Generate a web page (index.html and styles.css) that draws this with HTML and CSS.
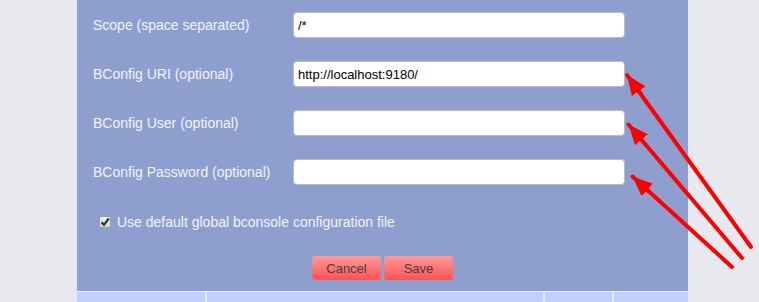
FILE: index.html
```html
<!DOCTYPE html>
<html lang="en">
<head>
  <meta charset="UTF-8" />
  <title>BConfig settings</title>
  <link rel="stylesheet" href="styles.css">
</head>
<body>

  <div class="panel">
    <div class="row">
      <label class="label">Scope (space separated)</label>
      <input class="field" type="text" value="/*" />
    </div>
    <div class="row">
      <label class="label">BConfig URI (optional)</label>
      <input class="field" type="text" value="http://localhost:9180/" />
    </div>
    <div class="row">
      <label class="label">BConfig User (optional)</label>
      <input class="field" type="text" />
    </div>
    <div class="row">
      <label class="label">BConfig Password (optional)</label>
      <input class="field" type="password" />
    </div>

    <div class="check-row">
      <span class="check">
        <svg width="10" height="10" viewBox="0 0 10 10"><path d="M1.5 5.2 L4 7.8 L8.8 1.5" fill="none" stroke="#333" stroke-width="2.2"/></svg>
      </span>
      <span>Use default global bconsole configuration file</span>
    </div>

    <div class="buttons">
      <button class="btn">Cancel</button>
      <button class="btn">Save</button>
    </div>
  </div>

  <div class="table-row">
    <div class="cell c1"></div>
    <div class="cell c2"></div>
    <div class="cell c3"></div>
    <div class="cell c4"></div>
  </div>

  <!-- annotation arrows -->
  <svg class="arrows" width="759" height="302" viewBox="0 0 759 302">
    <defs>
      <marker id="head" markerWidth="5" markerHeight="4.2" refX="5" refY="2.1" orient="auto" markerUnits="strokeWidth">
        <path d="M0 0 L5 2.1 L0 4.2 Z" fill="#ff0000"/>
      </marker>
    </defs>
    <line x1="751" y1="247" x2="627" y2="75" stroke="#ff0000" stroke-width="4" stroke-linecap="round" marker-end="url(#head)"/>
    <line x1="742" y1="258" x2="628.5" y2="124.5" stroke="#ff0000" stroke-width="4" stroke-linecap="round" marker-end="url(#head)"/>
    <line x1="732" y1="267" x2="632.5" y2="176.5" stroke="#ff0000" stroke-width="4" stroke-linecap="round" marker-end="url(#head)"/>
  </svg>

</body>
</html>
```

FILE: styles.css
```css
body {
  margin: 0;
  background: #e8e9ee;
  font-family: "Liberation Sans", Arial, sans-serif;
  position: relative;
  height: 302px;
  overflow: hidden;
}
.panel {
  margin-left: 77px;
  width: 611px;
  height: 292px;
  background: #8e9fcf;
  box-sizing: border-box;
  padding: 12px 0 0 16px;
  border-bottom: 1px solid #eef0f8;
}
.row {
  display: flex;
  align-items: center;
  height: 26px;
  margin-bottom: 23px;
}
.label {
  width: 200px;
  color: #f2f3fa;
  font-size: 14px;
}
.field {
  width: 332px;
  height: 26px;
  box-sizing: border-box;
  border: 1px solid #b9bcc6;
  border-radius: 4px;
  padding: 0 4px;
  font-family: "Liberation Sans", Arial, sans-serif;
  font-size: 13px;
  color: #000;
  background: #fff;
  outline: none;
}
.check-row {
  display: flex;
  align-items: center;
  gap: 6px;
  margin: 29px 0 0 6px;
  color: #f2f3fa;
  font-size: 14px;
}
.check {
  width: 12px;
  height: 12px;
  box-sizing: border-box;
  border: 1px solid #9a9ca4;
  border-radius: 2px;
  background: linear-gradient(#f0f0f0, #d4d4d6);
  display: flex;
  align-items: center;
  justify-content: center;
}
.buttons {
  display: flex;
  justify-content: center;
  gap: 3px;
  margin: 26px 0 0 -16px;
}
.btn {
  width: 69px;
  height: 24px;
  border: none;
  border-radius: 3px;
  background: linear-gradient(#ff9a9a, #ff5252);
  color: #4a3a45;
  font-family: "Liberation Sans", Arial, sans-serif;
  font-size: 13px;
  padding: 0;
}
.table-row {
  display: flex;
  margin-left: 77px;
  width: 611px;
  gap: 2px;
}
.cell {
  height: 12px;
  background: #c1d0fa;
}
.c1 { width: 128px; }
.c2 { width: 336px; }
.c3 { width: 67px; }
.c4 { flex: 1; }
.arrows {
  position: absolute;
  left: 0;
  top: 0;
}
```
